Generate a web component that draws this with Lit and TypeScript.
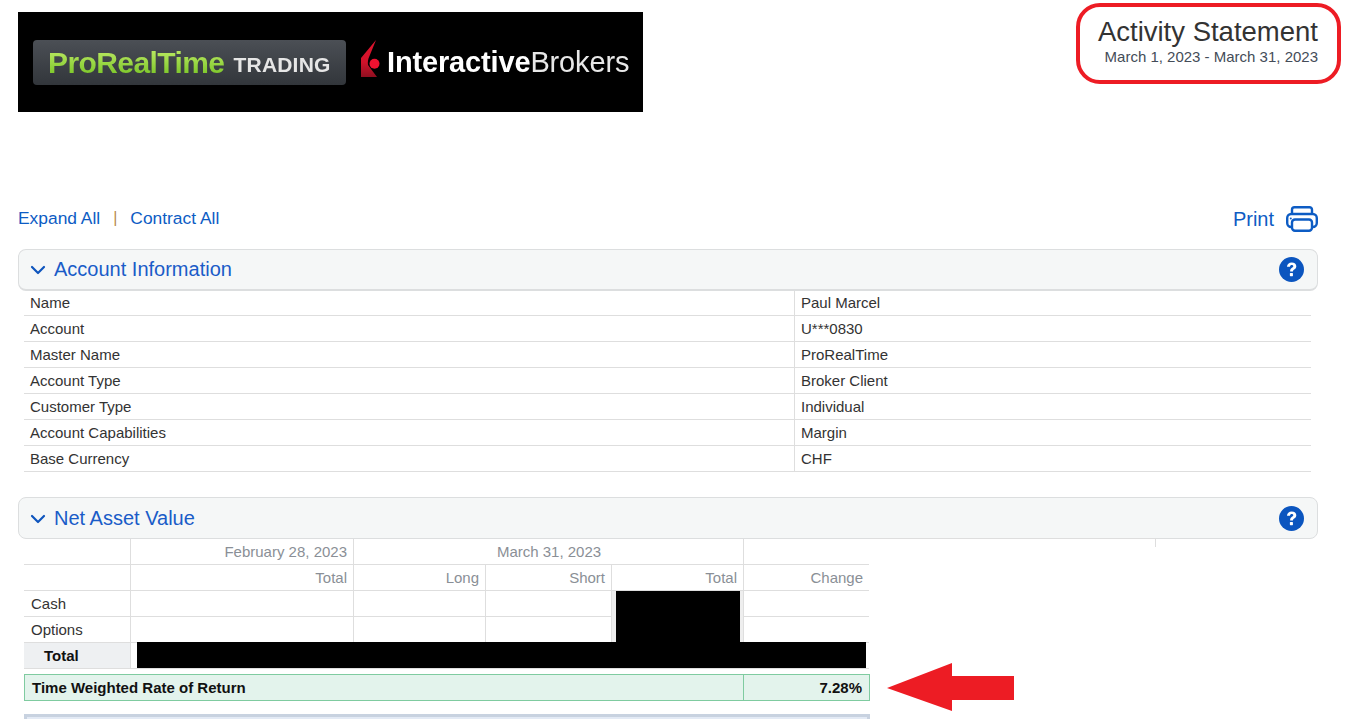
import { LitElement, html, css, svg } from "lit";
import { customElement } from "lit/decorators.js";

const chevron = html`<svg class="chev" width="16" height="10" viewBox="0 0 16 10"><path d="M2 2l6 6 6-6" fill="none" stroke="#0f55bd" stroke-width="2.2" stroke-linecap="round" stroke-linejoin="round"/></svg>`;
const help = html`<svg class="help" width="25" height="25" viewBox="0 0 26 26"><circle cx="13" cy="13" r="13" fill="#0b55bf"/><path d="M8.300 10.200c.1-2.900 2.100-4.600 4.900-4.600 2.900 0 4.800 1.600 4.800 3.900 0 1.600-.9 2.600-2.200 3.400-1 .7-1.300 1.100-1.300 2.300h-2.900c-.1-2 .4-2.900 1.900-3.900.9-.6 1.400-1.100 1.400-1.700 0-.8-.6-1.400-1.600-1.400-1.100 0-1.800.7-1.900 2z" fill="#fff"/><rect x="11.300" y="16.700" width="3.200" height="3.200" rx=".6" fill="#fff"/></svg>`;
const printer = html`<svg class="prn" width="32" height="26" viewBox="0 0 32 26" fill="none" stroke="#0d5cc4" stroke-width="2.400"><path d="M6 8V3.700A2.500 2.500 0 0 1 8.500 1.200h15A2.500 2.500 0 0 1 26 3.700V8"/><rect x="1.200" y="8" width="29.600" height="13" rx="4"/><rect x="6" y="13.500" width="20" height="11.300" rx="3" fill="#fff"/><circle cx="4.800" cy="12.600" r="1" fill="#0d5cc4" stroke="none"/></svg>`;
const flame = svg`<defs><linearGradient id="fl" x1="0" y1="0" x2="0" y2="1"><stop offset="0" stop-color="#e0142e"/><stop offset=".6" stop-color="#d0122a"/><stop offset="1" stop-color="#8f0f20"/></linearGradient></defs><path d="M16 0 L1 18 L1 37 L17 37 L8 25 C7.500 22 8 19 9.500 16Z" fill="url(#fl)"/><circle cx="14.500" cy="23.700" r="5" fill="#ee1230"/>`;

const info: [string, string][] = [
  ["Name", "Paul Marcel"],
  ["Account", "U***0830"],
  ["Master Name", "ProRealTime"],
  ["Account Type", "Broker Client"],
  ["Customer Type", "Individual"],
  ["Account Capabilities", "Margin"],
  ["Base Currency", "CHF"],
];

@customElement("app-root")
export class AppRoot extends LitElement {
  static styles = css`
    :host { display: block; height: 719px; overflow: hidden; position: relative; background: #fff; font-family: "Liberation Sans", Arial, sans-serif; color: #333; }
    .page { padding: 12px 32px 0 18px; }
    .top { display: flex; justify-content: space-between; align-items: flex-start; height: 100px; }
    .logo { width: 625px; height: 100px; background: #000; display: flex; align-items: center; box-sizing: border-box; padding: 0 0 0 15px; margin: 0; }
    .pill { width: 313px; height: 45px; margin-top: 1px; box-sizing: border-box; border-radius: 4px; background: linear-gradient(#4b4f55, #32363b); display: flex; align-items: center; padding-left: 15px; gap: 9px; filter: blur(.45px); }
    .prt { font-size: 30px; font-weight: 700; letter-spacing: -.58px; background: linear-gradient(#c4ee6a, #6fbf1e); -webkit-background-clip: text; background-clip: text; color: transparent; }
    .trd { font-size: 21px; font-weight: 700; color: #e6e6e6; letter-spacing: .2px; padding-top: 4px; }
    .ib { display: flex; align-items: center; margin-left: 14px; filter: blur(.35px); }
    .ib svg { margin-top: -5px; }
    .ibt { color: #fff; font-size: 29px; letter-spacing: -.15px; margin-left: 5px; padding-top: 1px; }
    .ibt b { font-weight: 700; }
    .ibt i { font-style: normal; color: #e8e8e8; }
    .title { position: relative; text-align: right; padding-top: 5px; }
    .title h1 { margin: 0; font-weight: 400; font-size: 27.5px; line-height: 30px; color: #333; }
    .title p { margin: 2px 0 0; font-size: 15px; line-height: 16px; color: #444c58; }
    .ring { position: absolute; left: -22px; right: -23px; top: -9px; height: 81px; box-sizing: border-box; border: 4px solid #ed1c24; border-radius: 24px; }
    .tools { display: flex; justify-content: space-between; align-items: center; margin-top: 91px; height: 30px; margin-bottom: 16px; color: #0d5cc4; font-size: 17.4px; }
    .tools .l { display: flex; align-items: center; }
    .sep { color: #b9894f; margin: 0 13px; font-size: 16px; }
    .print { display: flex; align-items: center; gap: 12px; font-size: 20px; padding-top: 3px; }
    .prn { margin-top: -2px; }
    .sec { display: flex; align-items: center; height: 42px; box-sizing: border-box; background: #f5f7f7; border: 1px solid #dcdedf; border-bottom-width: 2px; border-radius: 8px; padding: 0 13px 0 11px; color: #1a5cc8; font-size: 20px; }
    .sec.second { border-bottom-width: 1px; padding-top: 1px; }
    .sec .chev { margin-right: 8px; margin-top: 1px; }
    .sec span { flex: 1; }
    table { border-collapse: separate; border-spacing: 0; table-layout: fixed; font-size: 15px; }
    td { height: 25px; padding: 0 6px; border-bottom: 1px solid #dedede; border-right: 1px solid #dedede; white-space: nowrap; box-sizing: content-box; color: #333; }
    td:last-child { border-right: 0; }
    .info tr:first-child td { height: 23px; padding-bottom: 1px; }
    .info { width: 1287px; margin-left: 6px; margin-bottom: 25px; }
    .info td:first-child { width: 758px; }
    .info td { padding-left: 6px; }
    .nav { width: 845px; margin-left: 6px; margin-top: 0; }
    .nav td { padding: 0 6px 0 7px; }
    .nav tr.first td { padding-bottom: 1px; height: 24px; }
    .nav .head td { text-align: right; color: #8a8f96; }
    .nav .head td.c { text-align: center; }
    .nav td.totl { background: #eef0f2; font-weight: 700; color: #111; padding-left: 20px; }
    .nav td.redact { padding: 0 3px 0 4px; background: #eeeeee; border-bottom: 0; }
    .nav td.redrow { padding: 0 3px 0 6px; }
    .blk { background: #000; width: 100%; margin-top: -1px; }
    .nav td.redrow .blk { height: 26px; }
    .nav td.redact .blk { height: 52px; }
    .twr { width: 846px; margin: 5px 0 0 6px; height: 27px; box-sizing: border-box; display: grid; grid-template-columns: 718px 1fr; border: 1px solid #7fcba0; background: #e3f3ec; font-size: 15px; font-weight: 700; color: #111; align-items: center; }
    .twr div { padding: 0 7px; line-height: 25px; }
    .twr div:last-child { text-align: right; border-left: 1px solid #7fcba0; }
    .next { width: 846px; margin: 13px 0 0 6px; height: 20px; box-sizing: border-box; border: 3px solid #c8d2e0; background: #e3eaf5; }
    .arrow { position: absolute; left: 887px; top: 663px; }
    .tick { position: absolute; left: 1155px; top: 538px; width: 1px; height: 9px; background: #dedede; }
    .rule { position: absolute; left: 870px; top: 538px; width: 285px; height: 1px; background: #dedede; }
  `;

  render() {
    return html`<div class="page">
      <div class="top">
        <div class="logo">
          <div class="pill"><span class="prt">ProRealTime</span><span class="trd">TRADING</span></div>
          <div class="ib">
            <svg width="22" height="39" viewBox="0 0 22 39">${flame}</svg>
            <span class="ibt"><b>Interactive</b><i>Brokers</i></span>
          </div>
        </div>
        <div class="title">
          <div class="ring"></div>
          <h1>Activity Statement</h1>
          <p>March 1, 2023 - March 31, 2023</p>
        </div>
      </div>
      <div class="tools">
        <div class="l"><span>Expand All</span><span class="sep">|</span><span>Contract All</span></div>
        <div class="print"><span>Print</span>${printer}</div>
      </div>
      <div class="sec">${chevron}<span>Account Information</span>${help}</div>
      <table class="info">
        ${info.map(([a, b]) => html`<tr><td>${a}</td><td>${b}</td></tr>`)}
      </table>
      <div class="sec second">${chevron}<span>Net Asset Value</span>${help}</div>
      <table class="nav">
        <colgroup>
          <col style="width:107px" /><col style="width:223px" /><col style="width:132px" /><col style="width:126px" /><col style="width:132px" /><col style="width:125px" />
        </colgroup>
        <tr class="head first"><td></td><td>February 28, 2023</td><td colspan="3" class="c">March 31, 2023</td><td></td></tr>
        <tr class="head"><td></td><td>Total</td><td>Long</td><td>Short</td><td>Total</td><td>Change</td></tr>
        <tr><td>Cash</td><td></td><td></td><td></td><td rowspan="2" class="redact"><div class="blk"></div></td><td></td></tr>
        <tr><td>Options</td><td></td><td></td><td></td><td></td></tr>
        <tr><td class="totl">Total</td><td colspan="5" class="redrow"><div class="blk"></div></td></tr>
      </table>
      <div class="twr"><div>Time Weighted Rate of Return</div><div>7.28%</div></div>
      <div class="next"></div>
    </div>
    <div class="rule"></div><div class="tick"></div>
    <svg class="arrow" width="128" height="49" viewBox="0 0 128 49"><path d="M0 25 L65 0 L65 13 L127 13 L127 37 L65 37 L65 48Z" fill="#ed1c24"/></svg>`;
  }
}
